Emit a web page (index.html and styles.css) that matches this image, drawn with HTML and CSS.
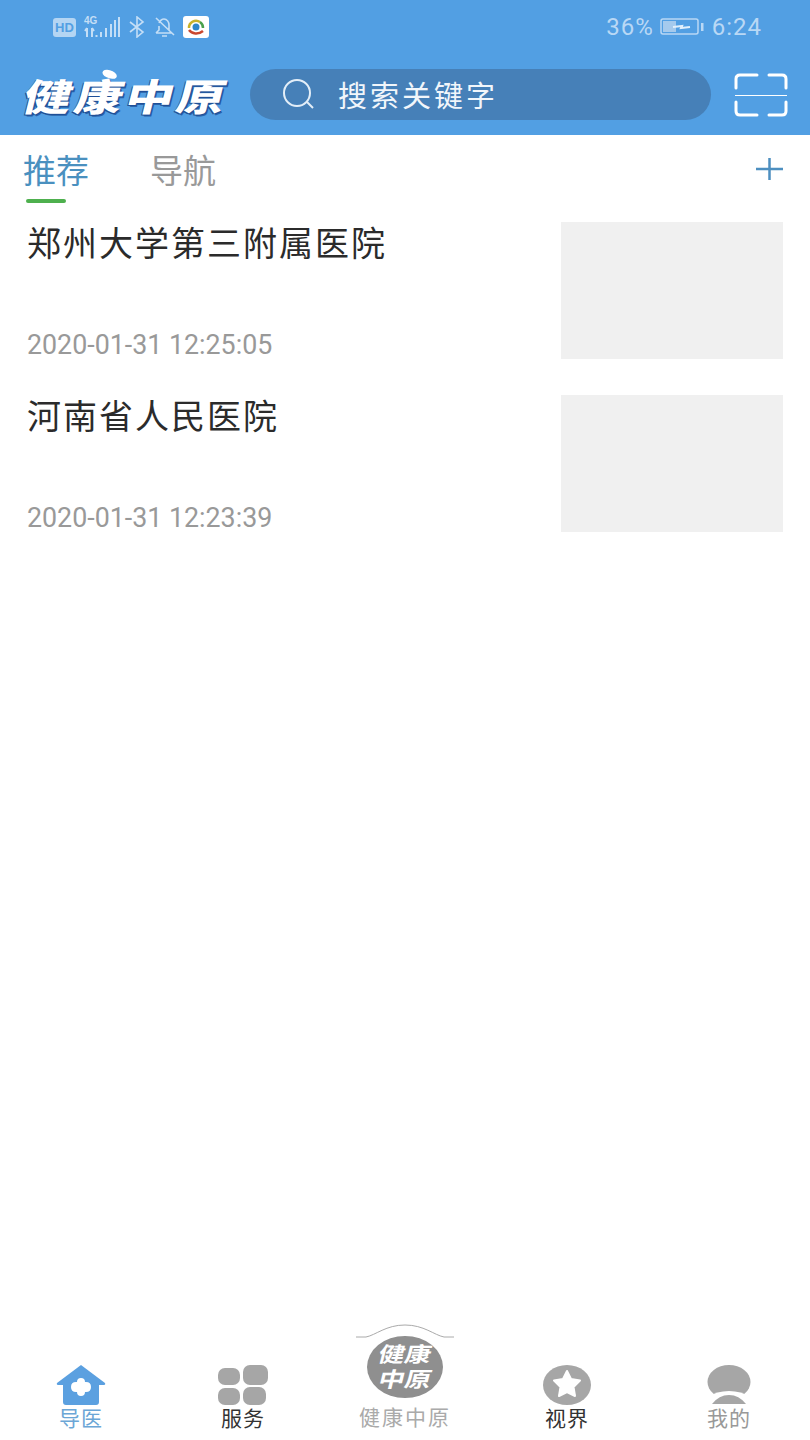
FILE: index.html
```html
<!DOCTYPE html>
<html lang="zh-CN">
<head>
<meta charset="utf-8">
<title>健康中原</title>
<link rel="stylesheet" href="styles.css">
</head>
<body>
<div class="page">
  <header class="top">
    <div class="status">
      <div class="status-left">
        <span class="hd">HD</span>
        <svg class="sig" width="38" height="24" viewBox="0 0 38 24">
          <text x="1" y="9" class="sig-text">4G</text>
          <path d="M4 13v9M2 16l2-3M9 13v9M9 13l2 3M13.500 20v2M18 17v5M23 13v9M28 9v13M32 5v17M36 2v20" class="sig-line"/>
        </svg>
        <svg class="ico-bt" width="18" height="22" viewBox="0 0 18 22">
          <path d="M2 6l13 10-6 5V1l6 5L2 16" class="st-line"/>
        </svg>
        <svg class="ico-bell" width="24" height="22" viewBox="0 0 24 22">
          <path d="M3 17h15l-2-3V9c0-3-2-6-5-6S7 5 6 7M6 10v4l-3 3M9 20h5M3 2l18 17" class="st-line"/>
        </svg>
        <svg class="ico-app" width="26" height="22" viewBox="0 0 26 22">
          <rect width="26" height="22" rx="3" fill="#fff"/>
          <path d="M6 12a7 7 0 0 1 11-6" fill="none" stroke="#c7b22a" stroke-width="2.500"/>
          <path d="M17 6a7 7 0 0 1 3 6" fill="none" stroke="#49a04c" stroke-width="2.500"/>
          <path d="M6 14c3 4 9 5 14 1" fill="none" stroke="#c9472f" stroke-width="2.500"/>
          <circle cx="13" cy="11" r="3.500" fill="#2e86c9"/>
        </svg>
      </div>
      <div class="status-right">
        <span>36%</span>
        <svg class="batt" width="44" height="18" viewBox="0 0 44 18">
          <rect x="1" y="1" width="37" height="15" rx="2" class="batt-box"/>
          <rect x="3" y="3" width="13" height="11" class="batt-fill"/>
          <path d="M13 9l9-1-1 2 9-1" class="batt-bolt"/>
          <rect x="41" y="5" width="2.500" height="8" class="batt-tip"/>
        </svg>
        <span>6:24</span>
      </div>
    </div>
    <div class="bar">
      <div class="logo">健康中原</div>
      <div class="search">
        <svg width="34" height="32" viewBox="0 0 34 32">
          <circle cx="15" cy="14" r="13" class="search-line"/>
          <path d="M25 23l6 6" class="search-line"/>
        </svg>
        <span>搜索关键字</span>
      </div>
      <svg class="scan" width="54" height="46" viewBox="0 0 54 46">
        <path d="M2 16V7q0-4 4-4h17M35 3h13q4 0 4 4v9M2 30v9q0 4 4 4h17M35 43h13q4 0 4-4v-9" class="scan-line"/>
        <path d="M1 23.500h52" class="scan-mid"/>
      </svg>
    </div>
  </header>

  <nav class="tabs">
    <div class="tab active">推荐</div>
    <div class="tab">导航</div>
    <svg class="plus" width="27" height="22" viewBox="0 0 27 22">
      <path d="M0 11h27M13.500 0v22" class="plus-line"/>
    </svg>
  </nav>

  <main class="list">
    <article class="row">
      <div class="row-text">
        <h2>郑州大学第三附属医院</h2>
        <time>2020-01-31 12:25:05</time>
      </div>
      <div class="thumb"></div>
    </article>
    <article class="row">
      <div class="row-text">
        <h2>河南省人民医院</h2>
        <time>2020-01-31 12:23:39</time>
      </div>
      <div class="thumb"></div>
    </article>
  </main>

  <footer class="nav">
    <div class="nav-item current">
      <svg width="50" height="40" viewBox="0 0 50 40">
        <path d="M25 0 49 18q1 2-2 2h-4v17q0 3-3 3H10q-3 0-3-3V20H3q-3 0-2-2Z" fill="#5ba0e0"/>
        <path d="M21 17q0-4 4-4t4 4h1q5 0 5 5t-5 5h-1q0 4-4 4t-4-4h-1q-5 0-5-5t5-5Z" fill="#fff"/>
      </svg>
      <span>导医</span>
    </div>
    <div class="nav-item dark">
      <svg width="50" height="40" viewBox="0 0 50 40">
        <rect x="0" y="3" width="22" height="17" rx="7" fill="#a6a6a6"/>
        <rect x="25" y="0" width="25" height="20" rx="7" fill="#a6a6a6"/>
        <rect x="0" y="23" width="22" height="17" rx="7" fill="#a6a6a6"/>
        <rect x="25" y="22" width="23" height="18" rx="7" fill="#a6a6a6"/>
      </svg>
      <span>服务</span>
    </div>
    <div class="nav-item center">
      <svg class="arc" width="98" height="14" viewBox="0 0 98 14">
        <path d="M0 13h10C20 11 30 1 49 1s29 10 39 12h10" fill="none" stroke="#aaa" stroke-width="1"/>
      </svg>
      <div class="badge"><span>健康</span><span>中原</span></div>
      <span class="center-label">健康中原</span>
    </div>
    <div class="nav-item dark">
      <svg width="50" height="40" viewBox="0 0 50 40">
        <ellipse cx="25" cy="20" rx="24" ry="20" fill="#a6a6a6"/>
        <path d="M25 6l4 8 9 1.500-6.500 6.500 1.500 9-8-4-8 4 1.500-9L12 15.500l9-1.500Z" fill="#fff" stroke="#fff" stroke-width="2" stroke-linejoin="round"/>
      </svg>
      <span>视界</span>
    </div>
    <div class="nav-item">
      <svg width="44" height="40" viewBox="0 0 44 40">
        <ellipse cx="22" cy="17" rx="21.500" ry="17" fill="#a6a6a6"/>
        <path d="M0 32Q10 26 22 26t22 6v8H0Z" fill="#fff"/>
        <path d="M5 39Q12 30 22 30t17 9Z" fill="#a6a6a6"/>
      </svg>
      <span>我的</span>
    </div>
  </footer>
</div>
</body>
</html>
```

FILE: styles.css
```css
* { box-sizing: border-box; }

html, body {
  margin: 0;
  padding: 0;
}

body {
  background: #fff;
  font-family: "Noto Sans CJK SC", "Noto Sans", sans-serif;
}

.page {
  width: 810px;
  height: 1440px;
  display: flex;
  flex-direction: column;
  overflow: hidden;
}

/* header */
.top {
  height: 135px;
  background: #529fe3;
  flex: none;
}

.status {
  height: 56px;
  display: flex;
  justify-content: space-between;
  align-items: center;
  padding: 0 48px 2px 53px;
}

.status-left {
  display: flex;
  align-items: center;
}

.hd {
  width: 23px;
  height: 19px;
  border-radius: 3px;
  background: #b4d5f3;
  color: #529fe3;
  font: 700 13px/19px "Liberation Sans", sans-serif;
  text-align: center;
}

.sig { margin-left: 7px; }

.sig-text {
  font: 700 10px "Liberation Sans", sans-serif;
  fill: #c4def6;
}

.sig-line,
.st-line {
  fill: none;
  stroke: #c4def6;
  stroke-width: 2;
}

.st-line { stroke-width: 1.6; }

.ico-bt { margin-left: 7px; }
.ico-bell { margin-left: 7px; }
.ico-app { margin-left: 6px; }

.status-right {
  display: flex;
  align-items: center;
  gap: 8px;
  color: #b9d8f5;
  font: 400 24px/28px Roboto, sans-serif;
  letter-spacing: 1px;
}

.batt { margin-left: -2px; }

.batt-box {
  fill: none;
  stroke: #b9d8f5;
  stroke-width: 1.500;
}

.batt-fill { fill: #a5caed; }

.batt-bolt {
  fill: none;
  stroke: #e2f0fc;
  stroke-width: 2;
}

.batt-tip { fill: #b9d8f5; }

.bar {
  height: 79px;
  display: flex;
  align-items: flex-start;
  padding: 13px 23px 0 24px;
}

.logo {
  position: relative;
  width: 200px;
  flex: none;
  margin-top: -1px;
  padding-left: 1px;
  color: #fff;
  font: 900 48px/54px "Noto Sans CJK SC", sans-serif;
  letter-spacing: 3px;
  white-space: nowrap;
  transform: skewX(-14deg) scaleY(0.78);
  text-shadow: 1px 1px 0 #1f4f97, -1px 1px 0 #1f4f97, 2px 2px 0 #2a62a8;
}

/* the small leaf above the logo's second character */
.logo::after {
  content: "";
  position: absolute;
  left: 72px;
  top: -4px;
  width: 17px;
  height: 9px;
  border-radius: 50%;
  background: #fff;
  transform: rotate(30deg);
}

.search {
  width: 461px;
  height: 51px;
  margin-left: 26px;
  flex: none;
  display: flex;
  align-items: center;
  border-radius: 26px;
  background: #4680b8;
  padding-left: 32px;
  color: #f1f6fb;
  font-size: 29px;
  letter-spacing: 3px;
}

.search span {
  margin-left: 22px;
  line-height: 51px;
}

.search-line {
  fill: none;
  stroke: #e3eef8;
  stroke-width: 2;
}

.scan {
  margin-left: 23px;
  margin-top: 3px;
  flex: none;
}

.scan-line {
  fill: none;
  stroke: #fff;
  stroke-width: 3;
  stroke-linecap: round;
}

.scan-mid {
  fill: none;
  stroke: #fff;
  stroke-width: 1;
}

/* tabs */
.tabs {
  height: 69px;
  flex: none;
  display: flex;
  align-items: flex-start;
  gap: 61px;
  padding: 11px 27px 0 23px;
}

.tab {
  position: relative;
  font-size: 33px;
  line-height: 46px;
  color: #999;
}

.tab.active { color: #4a90bf; }

.tab.active::after {
  content: "";
  position: absolute;
  left: 3px;
  top: 53px;
  width: 40px;
  height: 4px;
  border-radius: 2px;
  background: #4eb04e;
}

.plus {
  margin-left: auto;
  margin-top: 12px;
}

.plus-line {
  fill: none;
  stroke: #4d8fc0;
  stroke-width: 2.500;
}

/* list */
.list {
  flex: 1;
  padding: 18px 27px 0;
  display: flex;
  flex-direction: column;
  gap: 36px;
}

.row {
  height: 137px;
  display: flex;
  justify-content: space-between;
}

.row-text {
  display: flex;
  flex-direction: column;
  justify-content: space-between;
}

.row-text h2 {
  margin: 0;
  font-size: 34px;
  font-weight: 400;
  line-height: 40px;
  letter-spacing: 2px;
  color: #2b2b2b;
}

.row-text time {
  font: 400 26.800px/28px Roboto, sans-serif;
  color: #999;
}

.thumb {
  width: 222px;
  height: 137px;
  flex: none;
  background: #f0f0f0;
}

/* bottom nav */
.nav {
  flex: none;
  height: 125px;
  display: grid;
  grid-template-columns: repeat(5, 162px);
  align-items: end;
  padding-bottom: 11px;
}

.nav-item {
  position: relative;
  display: flex;
  flex-direction: column;
  align-items: center;
  color: #999;
  font-size: 21px;
  line-height: 24px;
  letter-spacing: 1px;
}

.nav-item.current { color: #6ba6d6; }
.nav-item.dark { color: #333; }

.nav-item.center {
  top: -1px;
  color: #aaa;
  letter-spacing: 2px;
}

.arc {
  position: absolute;
  left: 32px;
  top: -12px;
}

.badge {
  width: 76px;
  height: 62px;
  border-radius: 50%;
  background: #8f8f8f;
  display: flex;
  flex-direction: column;
  align-items: center;
  justify-content: center;
  color: #fff;
  font-family: "Liberation Sans", "Noto Sans CJK SC", sans-serif;
  font-size: 21px;
  font-weight: 700;
  line-height: 25px;
  letter-spacing: 0;
}

.badge span {
  display: block;
  transform: skewX(-14deg) scaleX(1.25);
}

.center-label {
  margin-top: 6px;
}
```
